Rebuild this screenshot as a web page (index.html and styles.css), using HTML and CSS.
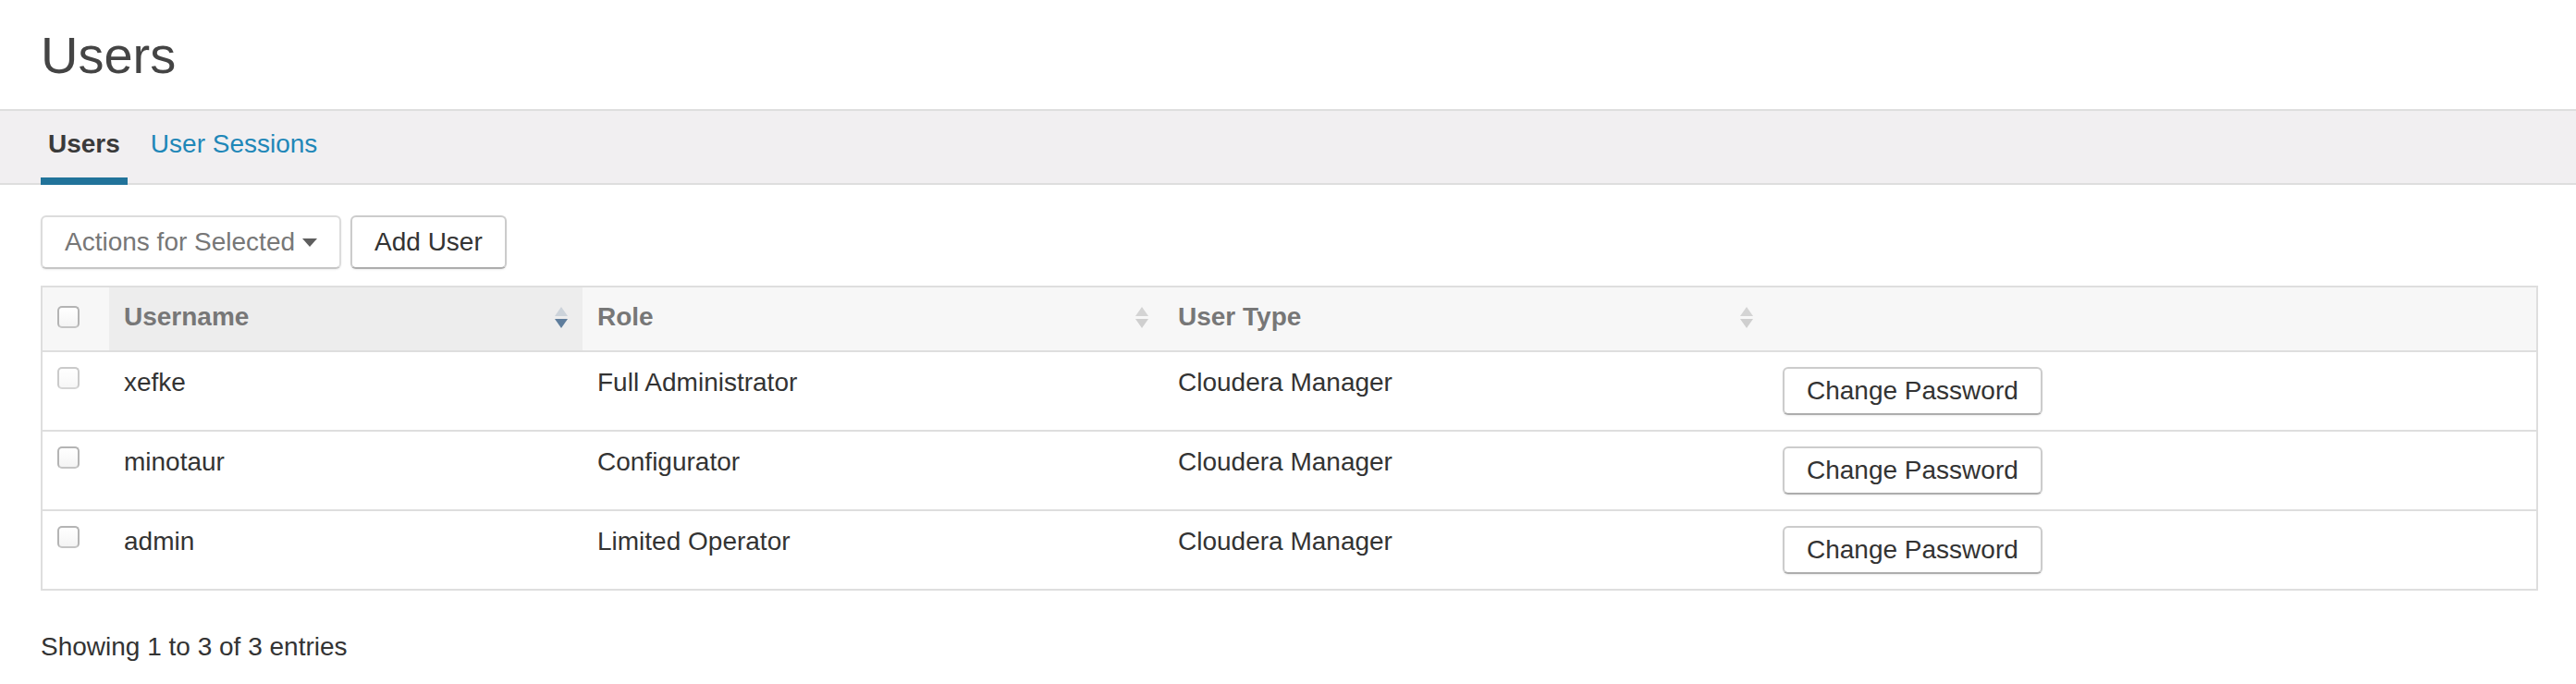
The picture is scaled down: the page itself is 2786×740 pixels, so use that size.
FILE: index.html
```html
<!DOCTYPE html>
<html lang="en">
<head>
<meta charset="utf-8">
<title>Users</title>
<link rel="stylesheet" href="styles.css">
</head>
<body>
<h1 class="page-title">Users</h1>
<nav class="tabs">
  <a class="tab active" href="#">Users</a>
  <a class="tab" href="#">User Sessions</a>
</nav>
<main class="content">
  <div class="toolbar">
    <button class="btn btn-muted" type="button">Actions for Selected<span class="caret"></span></button>
    <button class="btn" type="button">Add User</button>
  </div>
  <div class="table-wrap">
    <table class="users-table">
      <thead>
        <tr>
          <th class="c-check"><div class="th-inner"><input class="cb" type="checkbox"></div></th>
          <th class="c-user sorted"><div class="th-inner"><span>Username</span>
            <svg class="sort" width="14" height="23" viewBox="0 0 14 23"><polygon points="7,0 14,10 0,10" fill="#ccd3da"/><polygon points="0,13 14,13 7,23" fill="#5e7d9c"/></svg></div></th>
          <th class="c-role"><div class="th-inner"><span>Role</span>
            <svg class="sort" width="14" height="23" viewBox="0 0 14 23"><polygon points="7,0 14,10 0,10" fill="#d4d4d4"/><polygon points="0,13 14,13 7,23" fill="#cfcfcf"/></svg></div></th>
          <th class="c-type"><div class="th-inner"><span>User Type</span>
            <svg class="sort" width="14" height="23" viewBox="0 0 14 23"><polygon points="7,0 14,10 0,10" fill="#d4d4d4"/><polygon points="0,13 14,13 7,23" fill="#cfcfcf"/></svg></div></th>
          <th class="c-action"></th>
        </tr>
      </thead>
      <tbody>
        <tr>
          <td><input class="cb cb-faded" type="checkbox"></td>
          <td>xefke</td>
          <td>Full Administrator</td>
          <td>Cloudera Manager</td>
          <td><button class="btn btn-sm" type="button">Change Password</button></td>
        </tr>
        <tr>
          <td><input class="cb" type="checkbox"></td>
          <td>minotaur</td>
          <td>Configurator</td>
          <td>Cloudera Manager</td>
          <td><button class="btn btn-sm" type="button">Change Password</button></td>
        </tr>
        <tr>
          <td><input class="cb" type="checkbox"></td>
          <td>admin</td>
          <td>Limited Operator</td>
          <td>Cloudera Manager</td>
          <td><button class="btn btn-sm" type="button">Change Password</button></td>
        </tr>
      </tbody>
    </table>
  </div>
  <div class="footer-info">Showing 1 to 3 of 3 entries</div>
</main>
</body>
</html>
```
FILE: styles.css
```css
html, body {
  margin: 0;
  padding: 0;
  background: #fff;
}
body {
  font-family: "Liberation Sans", Arial, Helvetica, sans-serif;
  font-size: 28px;
  line-height: 40px;
  color: #333;
}
.page-title {
  margin: 0;
  padding: 29px 44px 0;
  height: 118px;
  box-sizing: border-box;
  font-size: 56px;
  line-height: 61.6px;
  font-weight: normal;
  color: #444;
}
.tabs {
  display: flex;
  background: #f1eff1;
  border-top: 2px solid #dedede;
  border-bottom: 2px solid #dedede;
  padding: 0 44px;
}
.tab {
  display: block;
  padding: 16px 8px;
  margin-bottom: -2px;
  border-bottom: 8px solid transparent;
  font-size: 28px;
  line-height: 40px;
  color: #1f87b8;
  text-decoration: none;
}
.tab + .tab {
  margin-left: 17px;
}
.tab.active {
  color: #3a3a3a;
  font-weight: bold;
  border-bottom-color: #21739a;
}
.content {
  padding: 33px 41px 0 44px;
}
.toolbar {
  display: flex;
  gap: 10px;
  margin-bottom: 18px;
}
.btn {
  font-family: inherit;
  font-size: 28px;
  line-height: 40px;
  padding: 7px 24px;
  border: 2px solid #cccccc;
  border-bottom-color: #adadad;
  border-radius: 6px;
  background: #fff;
  color: #333;
  box-shadow: 0 1px 2px rgba(0, 0, 0, 0.08);
  cursor: pointer;
}
.btn-muted {
  color: #777;
  border-color: #dcdcdc;
  border-bottom-color: #c6c6c6;
  display: flex;
  align-items: center;
}
.caret {
  display: inline-block;
  width: 0;
  height: 0;
  margin-left: 8px;
  border-left: 8px solid transparent;
  border-right: 8px solid transparent;
  border-top: 9px solid #5e5e5e;
}
.btn-sm {
  padding: 4px 24px;
  display: block;
}
.table-wrap {
  border: 2px solid #dedede;
}
.users-table {
  width: 100%;
  border-collapse: collapse;
  table-layout: fixed;
}
.users-table th {
  box-sizing: border-box;
  background: #f7f7f7;
  padding: 12px 16px 16px;
  text-align: left;
  font-weight: bold;
  color: #777;
  border-bottom: 2px solid #dedede;
  vertical-align: middle;
}
.users-table th.sorted {
  background: #ededed;
}
.th-inner {
  display: flex;
  justify-content: space-between;
  align-items: center;
  height: 40px;
}
.sort {
  display: block;
  flex: none;
}
.c-check { width: 72px; }
.c-user { width: 512px; }
.c-role { width: 628px; }
.c-type { width: 654px; }
.users-table td {
  padding: 16px;
  vertical-align: top;
  line-height: 34px;
  color: #333;
}
.users-table tbody tr + tr td {
  border-top: 2px solid #dedede;
}
.cb {
  -webkit-appearance: none;
  appearance: none;
  display: block;
  box-sizing: border-box;
  width: 24px;
  height: 24px;
  margin: 0;
  border: 2px solid #b4b4b4;
  border-bottom-color: #c4c4c4;
  border-radius: 5px;
  background: linear-gradient(#ffffff, #f4f4f4);
}
.cb-faded {
  opacity: 0.7;
}
.footer-info {
  margin-top: 41px;
  line-height: 40px;
  color: #333;
}
```
